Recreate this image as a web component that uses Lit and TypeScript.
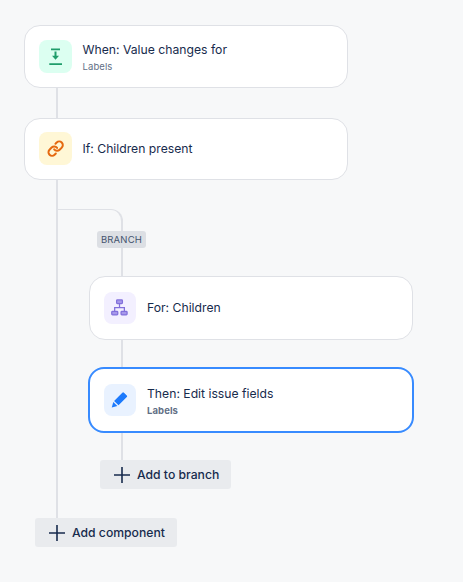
import { LitElement, html, css, svg } from "lit";
import { customElement } from "lit/decorators.js";

const plus = html`<svg class="plus" width="16" height="16" viewBox="0 0 16 16"><path d="M8 0v16M0 8h16" stroke="#172b4d" stroke-width="1.6" fill="none"/></svg>`;

const iconDown = svg`<path d="M12 9.4h9M10.3 24.2H23" stroke="#1f9d6b" stroke-width="1.8" fill="none"/><path d="M16.5 11.5v5" stroke="#1f9d6b" stroke-width="2" fill="none"/><path d="M13 15.8h7l-3.5 4z" fill="#1f9d6b"/>`;
const iconLink = svg`<g transform="translate(8 8) scale(.72)" stroke="#e56910" stroke-width="2.8" fill="none" stroke-linecap="round" stroke-linejoin="round"><path d="M10 13a5 5 0 0 0 7.54.54l3-3a5 5 0 0 0-7.07-7.07l-1.72 1.71"/><path d="M14 11a5 5 0 0 0-7.54-.54l-3 3a5 5 0 0 0 7.07 7.07l1.71-1.71"/></g>`;
const iconTree = svg`<g stroke="#8270db" fill="#a698ea" stroke-width="1.3"><rect x="13" y="8.2" width="6" height="3.8" rx=".8"/><rect x="8" y="20" width="6.2" height="3.6" rx=".8"/><rect x="17.6" y="20" width="6.2" height="3.6" rx=".8"/><path d="M16 12v4M11 20v-4h10v4" fill="none"/></g>`;
const iconPencil = svg`<path d="M20.6 9 23.5 11.8a1.2 1.2 0 0 1 0 1.7L15 22l-4.600-4.500L18.900 9a1.200 1.200 0 0 1 1.700 0z" fill="#1d7afc"/><path d="M9.600 18.600 13.800 22.800 8 24.300z" fill="#1d7afc"/>`;

@customElement("app-root")
export class AppRoot extends LitElement {
  static styles = css`
    :host { display: block; height: 582px; box-sizing: border-box; background: #f7f8f9; padding: 25px 0 0 24px; font-family: Inter, "Liberation Sans", sans-serif; color: #172b4d; overflow: hidden; }
    .card { box-sizing: border-box; width: 324px; background: #fff; border: 1px solid #dfe1e6; border-radius: 16px; display: flex; align-items: center; padding-left: 14px; gap: 10.5px; }
    .h63 { height: 62.5px; }
    .h62 { height: 62px; }
    .for { height: 64px; margin-left: 31px; gap: 11px; }
    .then { height: 66px; width: 326px; margin-left: 30px; border: 2px solid #388bff; gap: 11px; }
    .icon { width: 33px; height: 33px; border-radius: 8px; flex: none; display: block; }
    .s32 { width: 32px; height: 32px; }
    .green { background: #dcfff1; } .yellow { background: #fff7d6; } .purple { background: #f3f0ff; } .blue { background: #e9f2ff; }
    .text.has-sub { padding-top: 2px; }
    .title { font-size: 12.2px; line-height: 16px; }
    .sub { font-size: 9.5px; line-height: 12px; color: #626f86; margin-top: 3px; letter-spacing: .1px; }
    .sub.bold { font-weight: 700; }
    .line { width: 2px; background: #dfe1e6; }
    .l30 { height: 30px; margin-left: 32px; }
    .trunk { margin-left: 32px; border-left: 2px solid #dfe1e6; padding: 29.5px 0 29px; width: 380px; }
    .elbow { box-sizing: border-box; width: 65px; height: 22px; border-top: 1px solid #dfe1e6; border-right: 2px solid #dfe1e6; border-top-right-radius: 12px; }
    .badge { box-sizing: border-box; margin-left: 39px; width: 49px; height: 17px; background: #dcdfe4; border-radius: 3px; font-size: 9.5px; line-height: 17px; text-align: center; color: #44546f; letter-spacing: .2px; }
    .bl { margin-left: 63px; }
    .l28 { height: 28px; } .l27 { height: 27px; }
    .btn { box-sizing: border-box; height: 29px; background: #e9ebee; border-radius: 3px; display: flex; align-items: center; font-size: 12.2px; font-weight: 500; color: #172b4d; gap: 7px; padding-left: 14px; }
    .b-branch { width: 131px; margin-left: 42px; }
    .b-main { width: 142px; margin-left: 11px; }
    .plus { flex: none; }
  `;

  private card(cls: string, iconCls: string, icon: unknown, title: string, sub?: string, bold = false) {
    return html`<div class="card ${cls}">
      <svg class="icon ${iconCls}" viewBox="0 0 33 33">${icon}</svg>
      <div class="text ${sub ? "has-sub" : ""}">
        <div class="title">${title}</div>
        ${sub ? html`<div class="sub ${bold ? "bold" : ""}">${sub}</div>` : ""}
      </div>
    </div>`;
  }

  render() {
    return html`
      ${this.card("h63", "green", iconDown, "When: Value changes for", "Labels")}
      <div class="line l30"></div>
      ${this.card("h62", "yellow", iconLink, "If: Children present")}
      <div class="trunk">
        <div class="elbow"></div>
        <div class="badge">BRANCH</div>
        <div class="line bl l28"></div>
        ${this.card("for", "purple s32", iconTree, "For: Children")}
        <div class="line bl l27"></div>
        ${this.card("then", "blue s32", iconPencil, "Then: Edit issue fields", "Labels", true)}
        <div class="line bl l27"></div>
        <div class="btn b-branch">${plus}<span>Add to branch</span></div>
      </div>
      <div class="btn b-main">${plus}<span>Add component</span></div>
    `;
  }
}
